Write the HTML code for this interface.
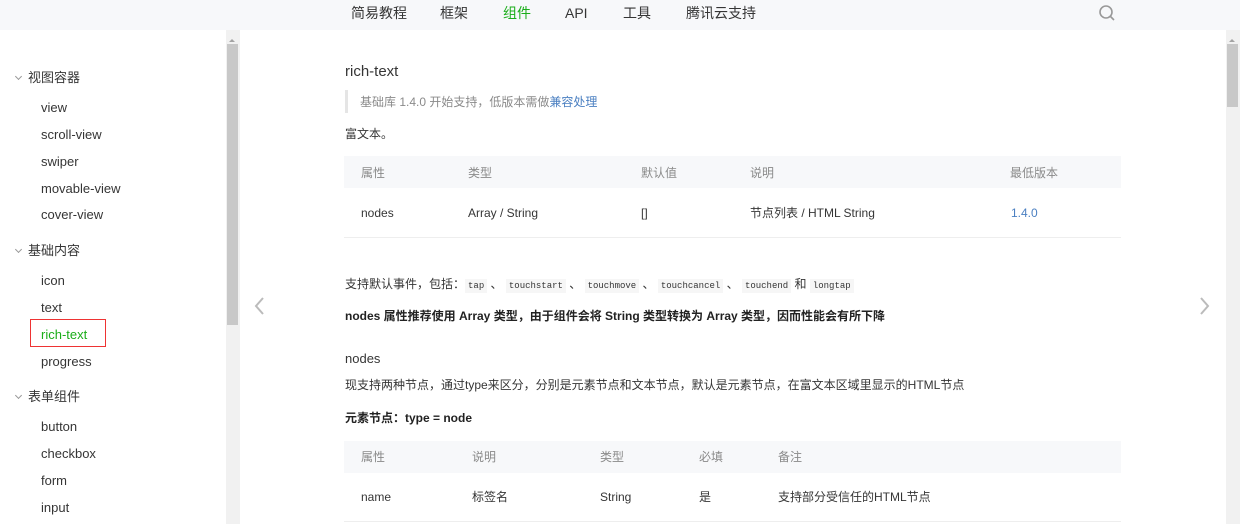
<!DOCTYPE html><html><head><meta charset="utf-8"><style>
*{margin:0;padding:0;box-sizing:border-box}
body{width:1240px;height:524px;overflow:hidden;background:#fff;font-family:"Liberation Sans","Noto Sans CJK SC",sans-serif;color:#353535;font-size:13px;position:relative}
.a{position:absolute;white-space:nowrap;line-height:16px}
.hd{position:absolute;left:0;top:0;width:1240px;height:30px;background:#f7f8fa}
.nav{font-size:14px;color:#353535;top:5px}
.sb{font-size:13px;color:#353535}
.g{color:#8a8a8a}
.code{font-family:"Liberation Mono",monospace;font-size:9px;background:#f6f6f6;padding:2px 3px;color:#353535}
.th{position:absolute;background:#f7f8fa}
.line{position:absolute;height:1px;background:#eee}
.chev{position:absolute;width:5px;height:5px;border-right:1px solid #999;border-bottom:1px solid #999;transform:rotate(45deg)}
.lk{color:#4a7fc1}
</style></head><body>
<div class="hd"></div>
<div class="a nav" style="left:351px">简易教程</div>
<div class="a nav" style="left:440px">框架</div>
<div class="a nav" style="left:503px;color:#1aad19">组件</div>
<div class="a nav" style="left:565px">API</div>
<div class="a nav" style="left:623px">工具</div>
<div class="a nav" style="left:686px">腾讯云支持</div>
<svg style="position:absolute;left:1098px;top:4px" width="18" height="18" viewBox="0 0 18 18"><circle cx="8" cy="8" r="6" fill="none" stroke="#999" stroke-width="1.6"/><line x1="12.5" y1="12.5" x2="16" y2="16" stroke="#999" stroke-width="1.6"/></svg>
<div style="position:absolute;left:226px;top:30px;width:14px;height:494px;background:#f1f1f1"></div>
<div style="position:absolute;left:227px;top:44px;width:11px;height:281px;background:#c8c8c8"></div>
<div style="position:absolute;left:229px;top:36px;border:3px solid transparent;border-bottom:3px solid #a3a3a3;width:0;height:0"></div>
<div style="position:absolute;left:1226px;top:30px;width:14px;height:494px;background:#f1f1f1"></div>
<div style="position:absolute;left:1227px;top:44px;width:11px;height:63px;background:#c8c8c8"></div>
<div style="position:absolute;left:1229px;top:36px;border:3px solid transparent;border-bottom:3px solid #a3a3a3;width:0;height:0"></div>
<div class="chev" style="left:16px;top:74px"></div>
<div class="a sb" style="left:28px;top:70px">视图容器</div>
<div class="a sb" style="left:41px;top:100px">view</div>
<div class="a sb" style="left:41px;top:127px">scroll-view</div>
<div class="a sb" style="left:41px;top:154px">swiper</div>
<div class="a sb" style="left:41px;top:181px">movable-view</div>
<div class="a sb" style="left:41px;top:207px">cover-view</div>
<div class="chev" style="left:16px;top:247px"></div>
<div class="a sb" style="left:28px;top:243px">基础内容</div>
<div class="a sb" style="left:41px;top:273px">icon</div>
<div class="a sb" style="left:41px;top:300px">text</div>
<div style="position:absolute;left:30px;top:319px;width:76px;height:28px;border:1.5px solid #e33"></div>
<div class="a sb" style="left:41px;top:327px;color:#1aad19">rich-text</div>
<div class="a sb" style="left:41px;top:354px">progress</div>
<div class="chev" style="left:16px;top:393px"></div>
<div class="a sb" style="left:28px;top:389px">表单组件</div>
<div class="a sb" style="left:41px;top:419px">button</div>
<div class="a sb" style="left:41px;top:446px">checkbox</div>
<div class="a sb" style="left:41px;top:473px">form</div>
<div class="a sb" style="left:41px;top:500px">input</div>
<svg style="position:absolute;left:253px;top:296px" width="12" height="20"><polyline points="10,2 3,10 10,18" fill="none" stroke="#bbb" stroke-width="2"/></svg>
<svg style="position:absolute;left:1199px;top:296px" width="12" height="20"><polyline points="2,2 9,10 2,18" fill="none" stroke="#bbb" stroke-width="2"/></svg>
<div class="a" style="left:345px;top:64px;font-size:15px">rich-text</div>
<div style="position:absolute;left:345px;top:90px;width:3px;height:23px;background:#e5e5e5"></div>
<div class="a g" style="left:360px;top:94px;font-size:12px">基础库 1.4.0 开始支持，低版本需做<span class="lk">兼容处理</span></div>
<div class="a" style="left:345px;top:126px;font-size:12px">富文本。</div>
<div class="th" style="left:344px;top:156px;width:777px;height:32px"></div>
<div class="a g" style="left:361px;top:165px;font-size:12px">属性</div>
<div class="a g" style="left:468px;top:165px;font-size:12px">类型</div>
<div class="a g" style="left:641px;top:165px;font-size:12px">默认值</div>
<div class="a g" style="left:750px;top:165px;font-size:12px">说明</div>
<div class="a g" style="left:1010px;top:165px;font-size:12px">最低版本</div>
<div class="a" style="left:361px;top:205px;font-size:12px">nodes</div>
<div class="a" style="left:468px;top:205px;font-size:12px">Array / String</div>
<div class="a" style="left:641px;top:205px;font-size:12px">[]</div>
<div class="a" style="left:750px;top:205px;font-size:12px">节点列表 / HTML String</div>
<div class="a lk" style="left:1011px;top:205px;font-size:12px">1.4.0</div>
<div class="line" style="left:344px;top:237px;width:777px"></div>
<div class="a" style="left:345px;top:276px;font-size:12px">支持默认事件，包括：<span class="code">tap</span> 、 <span class="code">touchstart</span> 、 <span class="code">touchmove</span> 、 <span class="code">touchcancel</span> 、 <span class="code">touchend</span> 和 <span class="code">longtap</span></div>
<div class="a" style="left:345px;top:308px;font-size:12px;font-weight:bold;color:#222">nodes 属性推荐使用 Array 类型，由于组件会将 String 类型转换为 Array 类型，因而性能会有所下降</div>
<div class="a" style="left:345px;top:351px;font-size:13px">nodes</div>
<div class="a" style="left:345px;top:377px;font-size:12px">现支持两种节点，通过type来区分，分别是元素节点和文本节点，默认是元素节点，在富文本区域里显示的HTML节点</div>
<div class="a" style="left:345px;top:410px;font-size:12px;font-weight:bold;color:#222">元素节点：type = node</div>
<div class="th" style="left:344px;top:441px;width:777px;height:32px"></div>
<div class="a g" style="left:361px;top:449px;font-size:12px">属性</div>
<div class="a g" style="left:472px;top:449px;font-size:12px">说明</div>
<div class="a g" style="left:600px;top:449px;font-size:12px">类型</div>
<div class="a g" style="left:699px;top:449px;font-size:12px">必填</div>
<div class="a g" style="left:778px;top:449px;font-size:12px">备注</div>
<div class="a" style="left:361px;top:489px;font-size:12px">name</div>
<div class="a" style="left:472px;top:489px;font-size:12px">标签名</div>
<div class="a" style="left:600px;top:489px;font-size:12px">String</div>
<div class="a" style="left:699px;top:489px;font-size:12px">是</div>
<div class="a" style="left:778px;top:489px;font-size:12px">支持部分受信任的HTML节点</div>
<div class="line" style="left:344px;top:521px;width:777px"></div>
</body></html>
